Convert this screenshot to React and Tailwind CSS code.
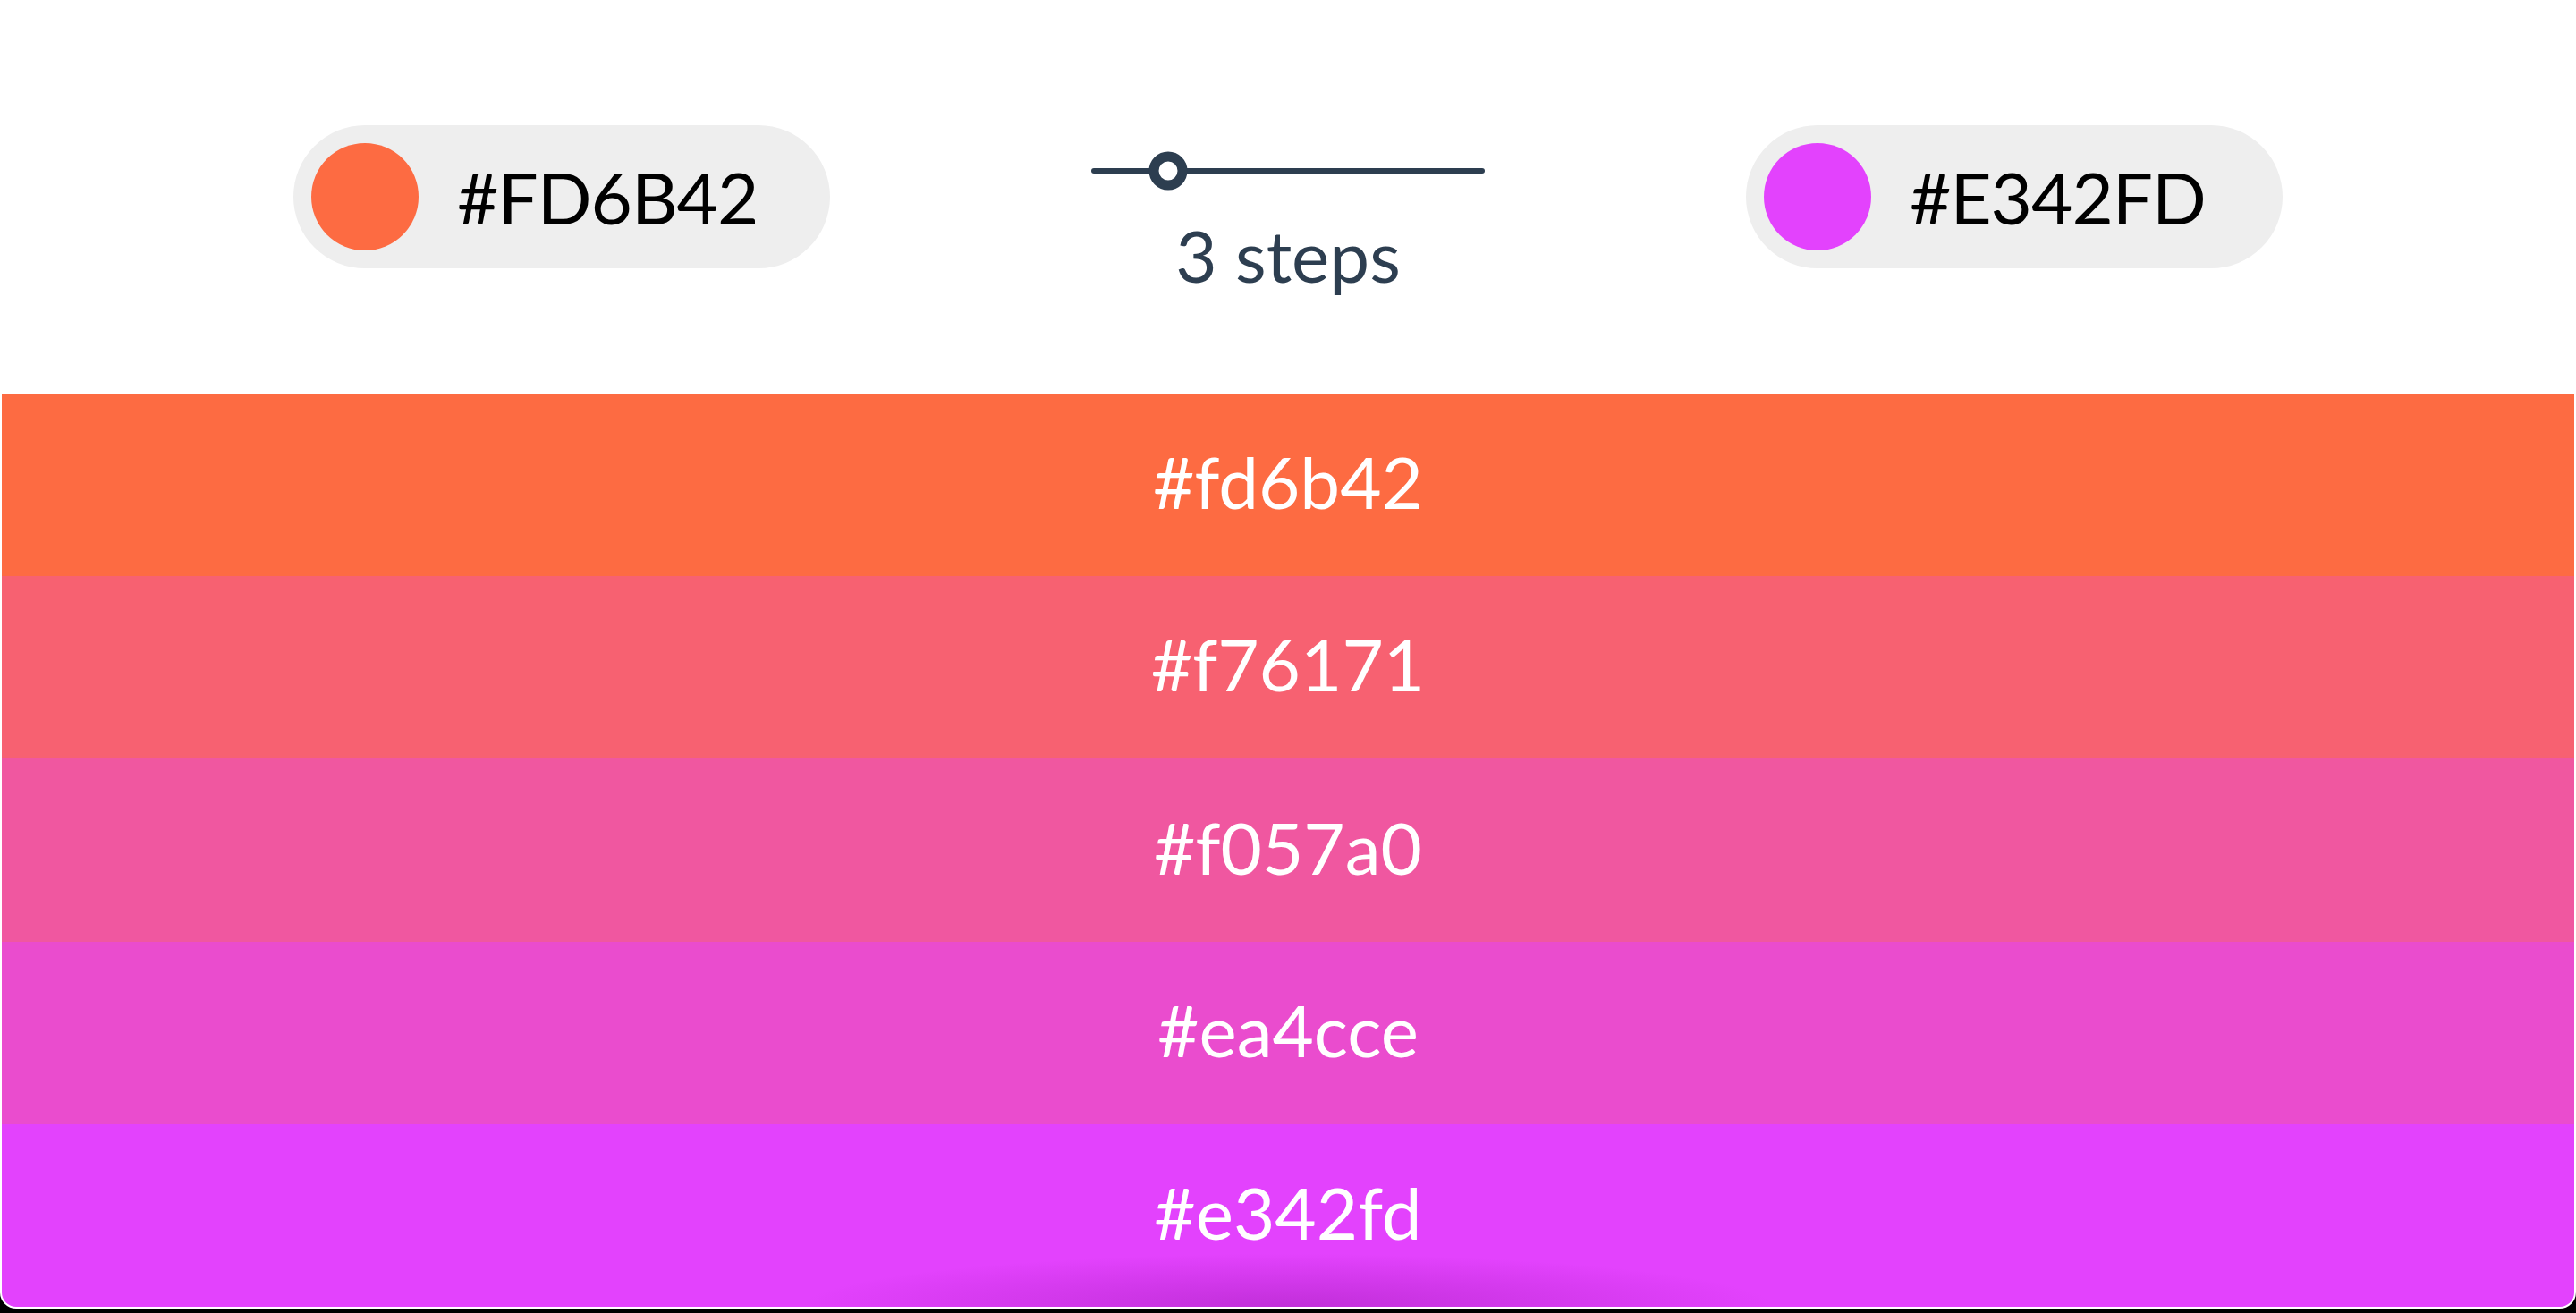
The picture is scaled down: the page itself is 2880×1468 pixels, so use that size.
import React from "react";

const bands = ["#fd6b42", "#f76171", "#f057a0", "#ea4cce", "#e342fd"];

function Pill({ color, label }) {
  return (
    <div className="flex h-[160px] w-[600px] items-center rounded-full bg-[#eeeeee] pl-[20px]">
      <div className="h-[120px] w-[120px] shrink-0 rounded-full" style={{ backgroundColor: color }} />
      <span className="ml-[43px] text-[80px] font-normal leading-none tracking-[-1px] text-black">{label}</span>
    </div>
  );
}

export default function App() {
  return (
    <div className="h-[1468px] w-[2880px] bg-black font-['Lato','Noto_Sans',sans-serif]">
      <div className="flex h-[1463px] flex-col overflow-hidden rounded-b-[18px] border-x-2 border-b-2 border-white/25 bg-white">
        <div className="flex h-[440px] shrink-0 items-center justify-between bg-white px-[326px]">
          <Pill color="#fd6b42" label="#FD6B42" />
          <div className="flex w-[440px] flex-col items-center self-start pt-[188px]">
            <div className="relative h-[6px] w-[440px] rounded-full bg-[#2d3e50]">
              <div className="absolute left-[86px] top-1/2 h-[43px] w-[43px] -translate-x-1/2 -translate-y-1/2 rounded-full border-[11px] border-[#2d3e50] bg-white" />
            </div>
            <span className="mt-[51px] text-[80px] font-normal leading-none text-[#2d3e50]">3 steps</span>
          </div>
          <Pill color="#e342fd" label="#E342FD" />
        </div>
        {bands.map((c, i) => (
          <div
            key={c}
            className="relative flex flex-1 items-center justify-center pb-[8px]"
            style={{ backgroundColor: c }}
          >
            {i === bands.length - 1 && (
              <div className="pointer-events-none absolute bottom-0 left-1/2 h-[120px] w-[1100px] -translate-x-1/2 translate-y-1/2 rounded-full bg-[radial-gradient(ellipse_at_center,rgba(130,10,150,0.35),rgba(130,10,150,0)_70%)]" />
            )}
            <span className="relative text-[80px] font-normal leading-none text-white">{c}</span>
          </div>
        ))}
      </div>
    </div>
  );
}
